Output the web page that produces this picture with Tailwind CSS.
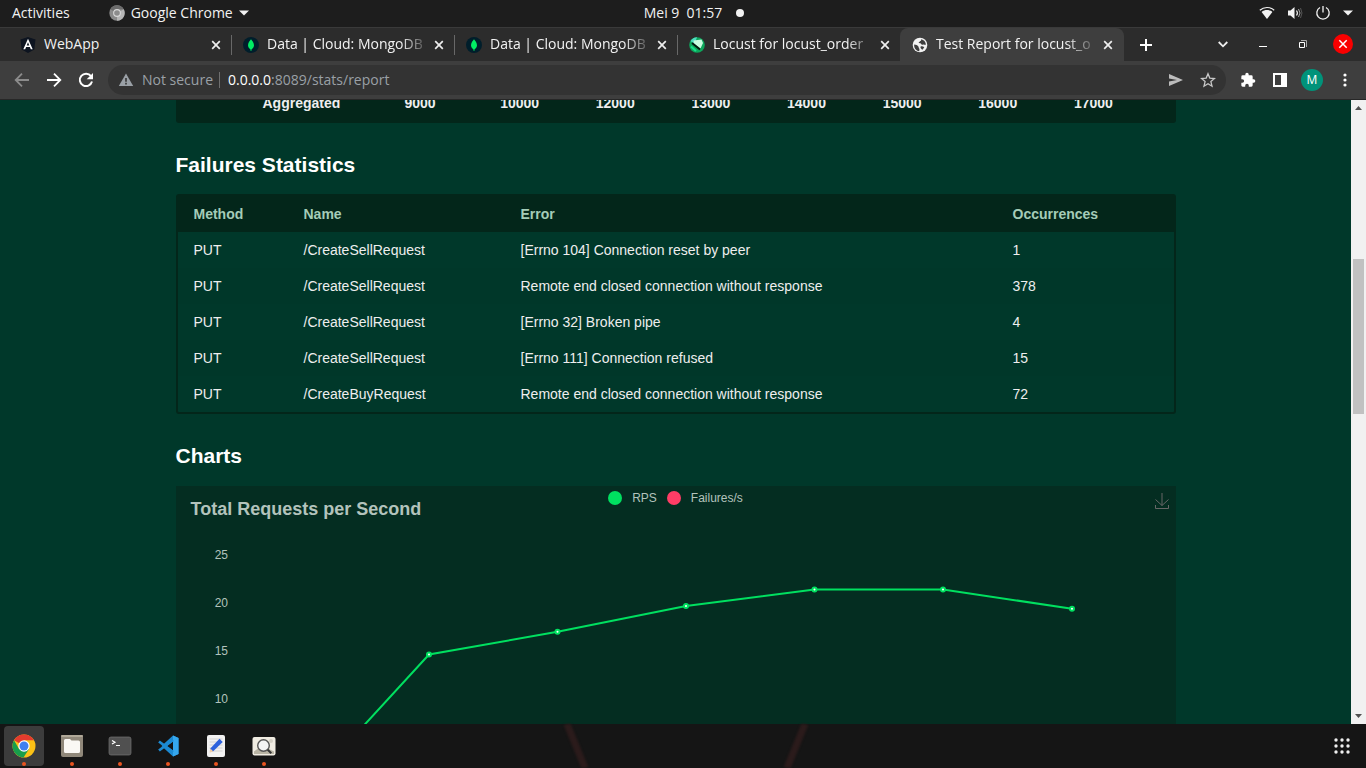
<!DOCTYPE html>
<html lang="en">
<head>
<meta charset="utf-8">
<title>Test Report for locust_order</title>
<script src="https://cdn.jsdelivr.net/npm/@tailwindcss/browser@4"></script>
</head>
<body class="h-screen flex flex-col overflow-hidden bg-[#151515] font-['Open_Sans',sans-serif] text-[#f2f2f2]">

<!-- System bar -->
<header class="h-7 shrink-0 bg-[#1d1d1d] border-b border-[#3a3a3a] grid grid-cols-3 items-center text-sm leading-5 px-3 pb-0.5">
  <div class="flex items-center gap-[39px]">
    <button type="button">Activities</button>
    <button type="button" class="flex items-center gap-1.5">
      <svg class="size-4" viewBox="0 0 16 16"><circle cx="8" cy="8" r="7.7" fill="#8a8a8a"/><path d="M8 8 1.3 4.2A7.7 7.7 0 0 1 14.700 4.200L8 4.300z" fill="#6c6c6c"/><path d="M8 8l6.700-3.800A7.700 7.700 0 0 1 8 15.700z" fill="#b5b5b5"/><circle cx="8" cy="8" r="3.900" fill="#d8d8d8"/><circle cx="8" cy="8" r="2.800" fill="#8c8c8c"/></svg>
      <span>Google Chrome</span>
      <svg class="w-2.5 h-1.5" viewBox="0 0 10 6"><path d="M0 .5h10L5 5.500z" fill="#f2f2f2"/></svg>
    </button>
  </div>
  <div class="flex items-center justify-center gap-3.5 pl-[22px]">
    <time class="whitespace-pre">Mei 9  01:57</time>
    <span class="size-2 rounded-full bg-[#f2f2f2]"></span>
  </div>
  <div class="flex items-center justify-end gap-3 pr-px">
    <svg class="size-4" viewBox="0 0 16 16"><path d="M.8 5.200C5 1.600 11 1.600 15.200 5.200" fill="none" stroke="#f2f2f2" stroke-width="1.200"/><path d="M2.600 6.900C5.800 4.500 10.200 4.500 13.400 6.900L8 14z" fill="#f2f2f2"/></svg>
    <svg class="size-4" viewBox="0 0 16 16"><path d="M1 5.500h2.500L7.500 2v12L3.500 10.500H1z" fill="#f2f2f2"/><path d="M9.500 5.500q1.800 2.500 0 5" fill="none" stroke="#f2f2f2" stroke-width="1.200"/><path d="M11.500 4q3 4 0 8" fill="none" stroke="#aaa" stroke-width="1"/><path d="M13.500 3q3 5 0 10" fill="none" stroke="#555" stroke-width="1"/></svg>
    <svg class="size-4" viewBox="0 0 16 16" fill="none" stroke="#f2f2f2" stroke-width="1.300"><path d="M5 2.500a6.200 6.200 0 1 0 6 0M8 1v6.500"/></svg>
    <svg class="w-2.5 h-1.5" viewBox="0 0 10 6"><path d="M0 .5h10L5 5.500z" fill="#f2f2f2"/></svg>
  </div>
</header>

<!-- Tab strip -->
<nav class="h-[33px] shrink-0 bg-[#2c2c2c] flex items-center pl-[9px] pr-[13px] text-sm leading-5" aria-label="Tabs">
  <div class="flex-1 max-w-[223px] min-w-0 flex items-center gap-2 pl-[11px] pr-2.5 h-5 border-r border-[#686868]">
    <svg class="size-4 shrink-0" viewBox="0 0 16 16"><path d="M8 0l7.500 2.600-1.200 10L8 16l-6.300-3.400-1.200-10z" fill="#0d1420"/><path d="M8 1.800 3.300 12.300h1.900l.9-2.300h3.800l.9 2.300h1.900zM8 5.300l1.300 3.200H6.700z" fill="#fff"/></svg>
    <span class="flex-1 truncate pb-0.5">WebApp</span>
    <button type="button" aria-label="Close tab"><svg class="size-2.5" viewBox="0 0 10 10"><path d="M1.200 1.200l7.600 7.600M8.800 1.200l-7.600 7.600" stroke="#eee" stroke-width="1.700"/></svg></button>
  </div>
  <div class="flex-1 max-w-[223px] min-w-0 flex items-center gap-2 pl-[11px] pr-2.5 h-5 border-r border-[#686868]">
    <svg class="size-4 shrink-0" viewBox="0 0 16 16"><circle cx="8" cy="8" r="8" fill="#001e2b"/><path d="M8 2.200c.7 1.500 3 2.800 3 6 0 2.300-1.700 3.500-2.500 4.200L8.300 14h-.6l-.2-1.600C6.700 11.700 5 10.500 5 8.200c0-3.200 2.300-4.500 3-6z" fill="#00ed64"/></svg>
    <span class="flex-1 -mr-1 pb-0.5 whitespace-nowrap overflow-hidden [mask-image:linear-gradient(to_right,#000_82%,transparent)]">Data | Cloud: MongoDB</span>
    <button type="button" aria-label="Close tab"><svg class="size-2.5" viewBox="0 0 10 10"><path d="M1.200 1.200l7.600 7.600M8.800 1.200l-7.600 7.600" stroke="#eee" stroke-width="1.700"/></svg></button>
  </div>
  <div class="flex-1 max-w-[223px] min-w-0 flex items-center gap-2 pl-[11px] pr-2.5 h-5 border-r border-[#686868]">
    <svg class="size-4 shrink-0" viewBox="0 0 16 16"><circle cx="8" cy="8" r="8" fill="#001e2b"/><path d="M8 2.200c.7 1.500 3 2.800 3 6 0 2.300-1.700 3.500-2.500 4.200L8.300 14h-.6l-.2-1.600C6.700 11.700 5 10.500 5 8.200c0-3.200 2.300-4.500 3-6z" fill="#00ed64"/></svg>
    <span class="flex-1 -mr-1 pb-0.5 whitespace-nowrap overflow-hidden [mask-image:linear-gradient(to_right,#000_82%,transparent)]">Data | Cloud: MongoDB</span>
    <button type="button" aria-label="Close tab"><svg class="size-2.5" viewBox="0 0 10 10"><path d="M1.200 1.200l7.600 7.600M8.800 1.200l-7.600 7.600" stroke="#eee" stroke-width="1.700"/></svg></button>
  </div>
  <div class="flex-1 max-w-[222px] min-w-0 flex items-center gap-2 pl-[11px] pr-2.5 h-5">
    <svg class="size-4 shrink-0" viewBox="0 0 16 16"><circle cx="8" cy="8" r="7.800" fill="#0da75c"/><path d="M1.500 4A7.800 7.800 0 0 1 8 .2L5.500 7z" fill="#4fdcc0"/><path d="M4.500 3.500 12.500 2.500l1.500 3.500-2.500 5.500L5 6.500z" fill="#c9fbe0"/><path d="M3 6l8 6.500" stroke="#04170e" stroke-width="1.800"/><path d="M2 9.500l5 4.500" stroke="#19e08a" stroke-width="2"/></svg>
    <span class="flex-1 -mr-1 pb-0.5 whitespace-nowrap overflow-hidden [mask-image:linear-gradient(to_right,#000_82%,transparent)]">Locust for locust_order</span>
    <button type="button" aria-label="Close tab"><svg class="size-2.5" viewBox="0 0 10 10"><path d="M1.200 1.200l7.600 7.600M8.800 1.200l-7.600 7.600" stroke="#eee" stroke-width="1.700"/></svg></button>
  </div>
  <div class="flex-1 max-w-[224px] min-w-0 h-full flex items-center gap-2 pl-3 pr-[11px] bg-[#3e3e3e] rounded-t-lg">
    <svg class="size-4 shrink-0" viewBox="0 0 16 16"><circle cx="8" cy="8" r="7.300" fill="#f2f2f2"/><path d="M2.200 7.500c2 .2 3 .8 4 1.800.9.800.2 2 1.300 2.700l-.3 2.200C4 13.800 1.800 11 2.200 7.500zM6.500 5.300c1.500-.2 1.200-1.500 2.500-1.600l.2-1.500c2.600.5 4.600 2.600 4.700 5.300-1 .9-1.600-.4-2.700 0-1.300.4-1.700.1-2.200-.8C8.300 6 7.500 6.600 6.500 5.300z" fill="#3e3e3e"/><path d="M8.500 9.800c1.300-.9 2.500-.4 3.800.5l-1.800 2.400c-1-.4-2.300-1.500-2-2.900z" fill="#3e3e3e"/></svg>
    <span class="flex-1 -mr-1 pb-0.5 whitespace-nowrap overflow-hidden [mask-image:linear-gradient(to_right,#000_80%,transparent)]">Test Report for locust_o</span>
    <button type="button" aria-label="Close tab"><svg class="size-2.5" viewBox="0 0 10 10"><path d="M1.200 1.200l7.600 7.600M8.800 1.200l-7.600 7.600" stroke="#eee" stroke-width="1.700"/></svg></button>
  </div>
  <button type="button" class="ml-4" aria-label="New tab"><svg class="size-3" viewBox="0 0 12 12"><path d="M6 0v12M0 6h12" stroke="#fff" stroke-width="2"/></svg></button>
  <div class="ml-auto flex items-center gap-[30px] pb-0.5">
    <button type="button" aria-label="Search tabs"><svg class="size-2.5" viewBox="0 0 10 10"><path d="M.7 3 5 7.300 9.300 3" fill="none" stroke="#eee" stroke-width="1.800"/></svg></button>
    <button type="button" aria-label="Minimize"><svg class="size-2.5" viewBox="0 0 10 10"><path d="M1 7.500h8" stroke="#fff"/></svg></button>
    <button type="button" aria-label="Restore"><svg class="size-2.5" viewBox="0 0 10 10" fill="none"><path d="M3 1.500h5.500V8" stroke="#aaa"/><path d="M1.500 3.500h5v5h-5z" stroke="#fff"/></svg></button>
    <button type="button" aria-label="Close" class="-ml-[5px] size-5 rounded-full bg-[#f90000] flex items-center justify-center"><svg class="size-2.5" viewBox="0 0 10 10"><path d="M1.300 1.300l7.400 7.400M8.700 1.300l-7.400 7.400" stroke="#fff" stroke-width="1.500"/></svg></button>
  </div>
</nav>

<!-- Toolbar -->
<div class="h-[39px] shrink-0 bg-[#3e3e3e] border-b border-[#272727] flex items-center pl-3.5 pr-[15px] text-sm leading-5">
  <div class="flex items-center gap-4">
    <button type="button" aria-label="Back"><svg class="size-4" viewBox="0 0 16 16" fill="none" stroke="#8b8b8b" stroke-width="1.800"><path d="M15 8H2M8 1.700 1.700 8 8 14.300"/></svg></button>
    <button type="button" aria-label="Forward"><svg class="size-4" viewBox="0 0 16 16" fill="none" stroke="#fff" stroke-width="1.800"><path d="M1 8h13M8 1.700 14.300 8 8 14.300"/></svg></button>
    <button type="button" aria-label="Reload"><svg class="size-4" viewBox="0 0 16 16"><path d="M13 4.200A6.200 6.200 0 1 0 14 9.500" fill="none" stroke="#fff" stroke-width="2"/><path d="M15 1v6.300H8.700z" fill="#fff"/></svg></button>
  </div>
  <div class="flex-1 h-[30px] ml-3.5 rounded-full bg-[#333] flex items-center pl-2.5 pr-2.5">
    <svg class="size-4" viewBox="0 0 16 16"><path d="M8 1.500 15.200 14H.8z" fill="#9aa0a6"/><path d="M7.200 6h1.600v3.800H7.200zM7.200 10.800h1.600v1.600H7.200z" fill="#333"/></svg>
    <span class="ml-2 text-[#9aa0a6] whitespace-nowrap">Not secure</span>
    <span class="ml-1.5 mr-2 w-px h-4 bg-[#6f6f6f]"></span>
    <a href="#report" class="flex-1 whitespace-nowrap text-[#9aa0a6]"><span class="text-white">0.0.0.0</span>:8089/stats/report</a>
    <button type="button" aria-label="Share"><svg class="size-4" viewBox="0 0 16 16"><path d="M1 2l14 6L1 14V9.500L9 8 1 6.500z" fill="#bcbcbc"/></svg></button>
    <button type="button" class="ml-4" aria-label="Bookmark"><svg class="size-4" viewBox="0 0 16 16"><path d="M8 1.800l1.800 4.300 4.700.4-3.600 3.100 1.100 4.600L8 11.700l-4 2.500 1.100-4.600L1.500 6.500l4.700-.4z" fill="none" stroke="#c8c8c8" stroke-width="1.300"/></svg></button>
  </div>
  <div class="flex items-center ml-3.5">
    <button type="button" aria-label="Extensions"><svg class="size-4" viewBox="0 0 24 24"><path d="M20.500 11H19V7a2 2 0 0 0-2-2h-4V3.500a2.500 2.500 0 0 0-5 0V5H4a2 2 0 0 0-2 2v3.800h1.500a2.700 2.700 0 0 1 0 5.400H2V20c0 1.100.9 2 2 2h3.800v-1.500a2.700 2.700 0 0 1 5.400 0V22H17a2 2 0 0 0 2-2v-4h1.500a2.500 2.500 0 0 0 0-5z" fill="#fff"/></svg></button>
    <button type="button" class="ml-4" aria-label="Side panel"><svg class="size-4" viewBox="0 0 16 16"><path d="M1 1h14v14H1zM3 3v10h6V3z" fill="#fff" fill-rule="evenodd"/></svg></button>
    <button type="button" class="ml-[13px] size-[22px] rounded-full bg-[#00937a] text-white text-xs leading-4" aria-label="Profile">M</button>
    <button type="button" class="ml-4" aria-label="Menu"><svg class="w-3 h-4" viewBox="0 0 12 16" fill="#fff"><circle cx="6" cy="3" r="1.600"/><circle cx="6" cy="8" r="1.600"/><circle cx="6" cy="13" r="1.600"/></svg></button>
  </div>
</div>

<!-- Page -->
<div class="flex-1 min-h-0 flex">
  <main id="report" class="flex-1 min-w-0 overflow-hidden bg-[#00382a] font-['Liberation_Sans',Arial,sans-serif] text-sm leading-5 text-[#eee]">
    <div class="w-full max-w-[1000px] mx-auto">
      <div class="h-[23px] overflow-hidden flex flex-col justify-end">
        <table class="w-full table-fixed border-collapse bg-[#03261a] rounded-b-[3px] overflow-hidden font-bold">
          <colgroup><col class="w-[71px]"><col class="w-[142px]"><col><col><col><col><col><col><col><col><col class="w-[22px]"></colgroup>
          <tbody><tr class="h-[38px] [&>td]:pl-4 [&>td]:pb-[3px]">
            <td></td><td>Aggregated</td><td>9000</td><td>10000</td><td>12000</td><td>13000</td><td>14000</td><td>15000</td><td>16000</td><td>17000</td><td></td>
          </tr></tbody>
        </table>
      </div>

      <h2 class="mt-7 text-[21px] leading-7 font-bold text-white">Failures Statistics</h2>
      <div class="mt-[15px] border-2 border-[#03261a] rounded-[3px]">
        <table class="w-full table-fixed border-collapse text-left [&_th]:pl-4 [&_td]:pl-4">
          <colgroup><col class="w-[110px]"><col class="w-[217px]"><col><col class="w-[177px]"></colgroup>
          <thead><tr class="h-9 bg-[#03261a] text-[#a5ccb8]"><th>Method</th><th>Name</th><th>Error</th><th>Occurrences</th></tr></thead>
          <tbody>
            <tr class="h-9"><td>PUT</td><td>/CreateSellRequest</td><td>[Errno 104] Connection reset by peer</td><td>1</td></tr>
            <tr class="h-9 bg-[#003729]"><td>PUT</td><td>/CreateSellRequest</td><td>Remote end closed connection without response</td><td>378</td></tr>
            <tr class="h-9"><td>PUT</td><td>/CreateSellRequest</td><td>[Errno 32] Broken pipe</td><td>4</td></tr>
            <tr class="h-9 bg-[#003729]"><td>PUT</td><td>/CreateSellRequest</td><td>[Errno 111] Connection refused</td><td>15</td></tr>
            <tr class="h-9"><td>PUT</td><td>/CreateBuyRequest</td><td>Remote end closed connection without response</td><td>72</td></tr>
          </tbody>
        </table>
      </div>

      <h2 class="mt-7 text-[21px] leading-7 font-bold text-white">Charts</h2>
      <section class="mt-4 bg-[#042d21]">
        <div class="grid grid-cols-[1fr_auto_1fr] items-start h-[38px]">
          <h3 class="pl-[15px] pt-[11px] text-lg leading-6 font-bold text-[#b3c3bc]">Total Requests per Second</h3>
          <div class="flex items-center pt-1 text-xs leading-4 text-[#b3c3bc]">
            <span class="size-3.5 rounded-full bg-[#00e060]"></span><span class="ml-2.5">RPS</span>
            <span class="ml-2.5 size-3.5 rounded-full bg-[#ff3d66]"></span><span class="ml-2.5">Failures/s</span>
          </div>
          <button type="button" class="justify-self-end mr-1.5 mt-[7px]" aria-label="Save as image"><svg class="size-4" viewBox="0 0 16 16" fill="none" stroke="#666"><path d="M8 0v12.500M1.500 6.500l6.500 6 6.500-6M1.500 12v3.500h13V12"/></svg></button>
        </div>
        <svg class="block w-full" viewBox="0 0 1000 340" font-family="Liberation Sans, Arial, sans-serif" font-size="12" fill="#b3c3bc" role="img" aria-label="Requests per second over time">
          <g text-anchor="end"><text x="52" y="35">25</text><text x="52" y="83">20</text><text x="52" y="131">15</text><text x="52" y="179">10</text></g>
          <path d="M125 270 253 130.500 381.500 107.800 510 82 638.500 65.500 767 65.500 896 84.700" fill="none" stroke="#00e060" stroke-width="2"/>
          <g fill="#fff" stroke="#00e060" stroke-width="2"><circle cx="253" cy="130.500" r="2"/><circle cx="381.500" cy="107.800" r="2"/><circle cx="510" cy="82" r="2"/><circle cx="638.500" cy="65.500" r="2"/><circle cx="767" cy="65.500" r="2"/><circle cx="896" cy="84.700" r="2"/></g>
        </svg>
      </section>
    </div>
  </main>
  <div class="w-[15px] shrink-0 bg-[#f1f1f1] flex flex-col items-center" aria-hidden="true">
    <svg class="size-[15px]" viewBox="0 0 15 15"><path d="M4 10h7L7.500 6z" fill="#505050"/></svg>
    <div class="flex-[144] min-h-0"></div>
    <div class="flex-[155] min-h-0 w-[11px] bg-[#c1c1c1]"></div>
    <div class="flex-[295] min-h-0"></div>
    <svg class="size-[15px]" viewBox="0 0 15 15"><path d="M4 5h7L7.500 9z" fill="#505050"/></svg>
  </div>
</div>

<!-- Dock -->
<footer class="relative h-11 shrink-0 bg-[#151515] flex items-center justify-between pl-1 pr-4">
  <svg class="absolute left-1/2 -translate-x-1/2 h-11 w-[260px] blur-[1px]" viewBox="0 0 260 44"><path d="M14 0l18 44M252 0l-18 44" stroke="#2b1b1b" stroke-width="7"/></svg>
  <div class="flex gap-2">
    <button type="button" class="size-10 rounded bg-[#3c3c3c] flex flex-col items-center pt-2" aria-label="Chrome">
      <svg class="size-6" viewBox="0 0 24 24"><circle cx="12" cy="12" r="11.500" fill="#fbc116"/><path d="M12 12 2 6.300A11.500 11.500 0 0 1 22 6.300H12z" fill="#e33b2e"/><path d="M2 6.300A11.500 11.500 0 0 0 11.500 23.500L17 15 7 15z" fill="#189e4c"/><circle cx="12" cy="12" r="5.700" fill="#fff"/><circle cx="12" cy="12" r="4.500" fill="#3f80f0"/></svg>
      <span class="mt-1 size-1 rounded-full bg-[#e95420]"></span>
    </button>
    <button type="button" class="size-10 rounded flex flex-col items-center pt-2" aria-label="Files">
      <svg class="size-6" viewBox="0 0 24 24"><rect x="1" y="1" width="22" height="22" rx="2" fill="#90887a"/><rect x="1" y="1" width="22" height="2" rx="1" fill="#b0a898"/><path d="M4 6.500Q4 5 5.500 5H10l1.500 1.500h7Q20 6.500 20 8v9.500q0 1.500-1.500 1.500h-13Q4 19 4 17.500z" fill="#faf8f4"/></svg>
      <span class="mt-1 size-1 rounded-full bg-[#e95420]"></span>
    </button>
    <button type="button" class="size-10 rounded flex flex-col items-center pt-2" aria-label="Terminal">
      <svg class="size-6" viewBox="0 0 24 24"><rect x="1" y="3" width="22" height="18" rx="2" fill="#505050" stroke="#727272" stroke-width=".7"/><path d="M4 6.500l3 1.800-3 1.800M8 11.500h4" fill="none" stroke="#fff" stroke-width="1.200"/></svg>
      <span class="mt-1 size-1 rounded-full bg-[#e95420]"></span>
    </button>
    <button type="button" class="size-10 rounded flex flex-col items-center pt-2" aria-label="Code">
      <svg class="size-6" viewBox="0 0 24 24"><path d="M17 1.500 5.500 12 17 22.500l5.500-2.500V4zM17 7.500v9L11 12z" fill="#1c8ad3" fill-rule="evenodd"/><path d="M17 1.500l5.500 2.500v16L17 22.500z" fill="#35a7ee"/><path d="M3 7.500l14 10.500M3 16.500 17 6" stroke="#1c8ad3" stroke-width="2.800"/></svg>
      <span class="mt-1 size-1 rounded-full bg-[#e95420]"></span>
    </button>
    <button type="button" class="size-10 rounded flex flex-col items-center pt-2" aria-label="Text editor">
      <svg class="size-6" viewBox="0 0 24 24"><rect x="3" y="1" width="18" height="22" rx="2" fill="#f2f2f2"/><path d="M5.500 5h13M5.500 8h13M5.500 11h13M5.500 14h13M5.500 17h13" stroke="#d2d2d2"/><path d="M15.500 4.800l3.200 3.200L9.200 17.200 6 18l.6-3.800z" fill="#2d62dd"/><path d="M6.500 14.500l-1 4.200 3.800-1.300z" fill="#f2cfaa"/></svg>
      <span class="mt-1 size-1 rounded-full bg-[#e95420]"></span>
    </button>
    <button type="button" class="size-10 rounded flex flex-col items-center pt-2" aria-label="Image viewer">
      <svg class="size-6" viewBox="0 0 24 24"><rect x=".5" y="3" width="23" height="18.500" rx="2" fill="#f0ece2"/><path d="M2 17.500l8-6 12 6V20H2z" fill="#b9b5a5"/><circle cx="19" cy="7" r="2" fill="#d4d0c4"/><circle cx="11.500" cy="11.500" r="5.800" fill="#f4f4f4" stroke="#555" stroke-width="1.400"/><path d="M15.700 15.700l3.600 3.600" stroke="#333" stroke-width="2"/></svg>
      <span class="mt-1 size-1 rounded-full bg-[#e95420]"></span>
    </button>
  </div>
  <button type="button" aria-label="Show applications"><svg class="size-4" viewBox="0 0 16 16" fill="#f0f0f0"><circle cx="2" cy="2" r="1.700"/><circle cx="8" cy="2" r="1.700"/><circle cx="14" cy="2" r="1.700"/><circle cx="2" cy="8" r="1.700"/><circle cx="8" cy="8" r="1.700"/><circle cx="14" cy="8" r="1.700"/><circle cx="2" cy="14" r="1.700"/><circle cx="8" cy="14" r="1.700"/><circle cx="14" cy="14" r="1.700"/></svg></button>
</footer>
</body>
</html>
